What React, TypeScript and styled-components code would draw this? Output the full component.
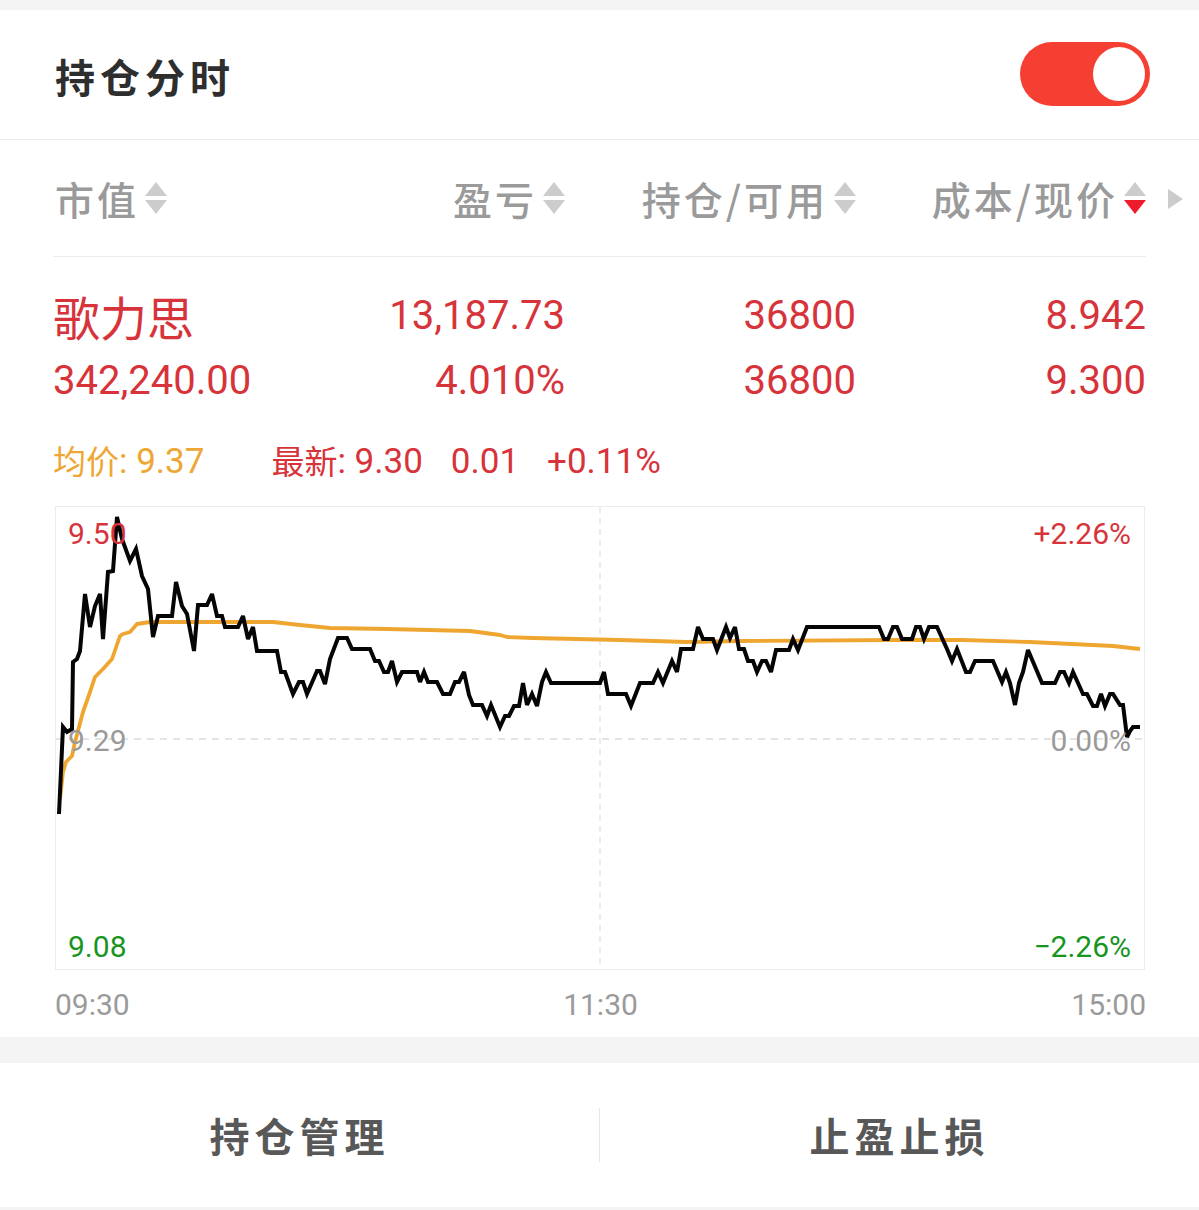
import React from "react";
import styled, { createGlobalStyle } from "styled-components";

const GlobalStyle = createGlobalStyle`
  html, body {
    margin: 0;
    padding: 0;
    background: #ffffff;
  }
  body {
    font-family: Roboto, "Noto Sans CJK SC", sans-serif;
  }
  * {
    box-sizing: border-box;
  }
`;

const RED = "#d7333b";
const ORANGE = "#eea634";
const GREEN = "#16951f";
const GREY = "#9a9a9a";
const CN = `"Noto Sans CJK SC", "Noto Sans", sans-serif`;

const PRICE_POINTS =
  "59,815 63,728 67,733 72,730 73,663 77,660 80,652 85,595 90,628 95,607 100,595 103,640 108,573 113,572 117,518 122,540 130,562 136,550 142,577 148,590 153,638 158,617 172,617 176,583 182,607 187,615 194,652 198,606 207,606 212,595 217,617 222,617 225,628 238,628 243,617 248,640 253,628 257,652 277,652 281,673 285,673 293,695 299,683 303,683 307,695 317,672 320,672 325,685 330,660 338,639 347,639 352,650 370,650 375,662 379,662 384,673 388,673 392,662 397,683 402,673 417,673 420,683 424,673 428,683 437,683 443,695 450,695 455,683 459,683 464,673 469,696 473,706 482,706 487,717 491,706 500,728 505,717 509,717 514,707 519,707 523,684 527,706 532,695 537,707 542,683 546,673 551,684 600,684 604,673 608,695 626,695 631,707 640,684 653,684 658,673 663,684 672,662 677,673 681,650 693,650 698,628 703,640 713,640 717,651 726,628 730,639 735,628 739,650 744,650 748,662 753,662 757,673 762,662 766,662 771,673 776,651 789,651 793,640 798,651 807,628 879,628 884,640 888,640 893,628 897,628 902,640 912,640 916,628 920,628 924,640 929,628 937,628 947,650 952,662 957,650 966,673 970,673 975,662 993,662 1002,683 1006,673 1010,684 1015,706 1019,684 1023,673 1028,651 1042,684 1055,684 1060,673 1064,673 1069,684 1073,673 1083,695 1087,695 1093,707 1097,707 1101,695 1105,707 1110,695 1113,695 1120,706 1123,706 1127,738 1130,732 1133,728 1140,728";

const AVG_POINTS =
  "60,800 63,773 66,763 72,757 75,743 83,713 90,693 95,678 103,670 112,660 120,637 123,635 130,633 137,625 150,623 190,623 273,623 300,626 330,629 387,630 470,632 500,636 507,638 533,639 620,641 687,643 740,642 897,641 963,641 1030,643 1113,647 1140,650";

const columns = [
  { label: "市值", align: "left", sort: "none" },
  { label: "盈亏", align: "right", sort: "none" },
  { label: "持仓/可用", align: "right", sort: "none" },
  { label: "成本/现价", align: "right", sort: "down" },
] as const;

const rows = [
  ["歌力思", "13,187.73", "36800", "8.942"],
  ["342,240.00", "4.010%", "36800", "9.300"],
];

export default function App() {
  return (
    <>
      <GlobalStyle />
      <Page>
        <Strip $h={10} />
        <TopBar>
          <Title>持仓分时</Title>
          <Toggle>
            <Knob />
          </Toggle>
        </TopBar>

        <Content>
          <HeaderRow>
            <HeaderGrid>
              {columns.map((c) => (
                <HeadCell key={c.label} $align={c.align}>
                  <HeadLabel>{c.label}</HeadLabel>
                  <SortIcon>
                    <Tri $dir="up" $active={false} />
                    <Tri $dir="down" $active={c.sort === "down"} />
                  </SortIcon>
                </HeadCell>
              ))}
            </HeaderGrid>
            <MoreCell>
              <MoreArrow />
            </MoreCell>
          </HeaderRow>

          <DataBlock>
            {rows.map((r, i) => (
              <DataGrid key={i}>
                {r.map((v, j) => (
                  <DataCell key={j} $align={j === 0 ? "left" : "right"} $name={i === 0 && j === 0}>
                    {v}
                  </DataCell>
                ))}
              </DataGrid>
            ))}
          </DataBlock>

          <InfoRow>
            <InfoItem $color={ORANGE}>
              <CnText>均价</CnText>: 9.37
            </InfoItem>
            <InfoGroup>
              <InfoItem $color={RED}>
                <CnText>最新</CnText>: 9.30
              </InfoItem>
              <InfoItem $color={RED}>0.01</InfoItem>
              <InfoItem $color={RED}>+0.11%</InfoItem>
            </InfoGroup>
          </InfoRow>

          <Chart>
            <ChartSvg viewBox="55 507 1090 464" preserveAspectRatio="none">
              <line x1="600" y1="508" x2="600" y2="970" stroke="#e6e6e6" strokeWidth="1.5" strokeDasharray="6 5" />
              <line x1="56" y1="740" x2="1144" y2="740" stroke="#dcdcdc" strokeWidth="1.5" strokeDasharray="7 6" />
              <polyline points={AVG_POINTS} fill="none" stroke="#efa631" strokeWidth="3.8" strokeLinejoin="round" />
              <polyline points={PRICE_POINTS} fill="none" stroke="#050505" strokeWidth="4" strokeLinejoin="miter" strokeMiterlimit="3" />
            </ChartSvg>
            <AxisLabel $color={RED} $top={12} $side="left">9.50</AxisLabel>
            <AxisLabel $color={RED} $top={12} $side="right">+2.26%</AxisLabel>
            <AxisLabel $color={GREY} $top={219} $side="left">9.29</AxisLabel>
            <AxisLabel $color={GREY} $top={219} $side="right">0.00%</AxisLabel>
            <AxisLabel $color={GREEN} $top={425} $side="left">9.08</AxisLabel>
            <AxisLabel $color={GREEN} $top={425} $side="right">−2.26%</AxisLabel>
          </Chart>

          <TimeRow>
            <span>09:30</span>
            <span>11:30</span>
            <span>15:00</span>
          </TimeRow>
        </Content>

        <Strip $h={26} />
        <Actions>
          <ActionButton>持仓管理</ActionButton>
          <ActionDivider />
          <ActionButton>止盈止损</ActionButton>
        </Actions>
        <Strip $h={3} />
      </Page>
    </>
  );
}

const Page = styled.div`
  width: 1199px;
  background: #fff;
`;

const Strip = styled.div<{ $h: number }>`
  height: ${({ $h }) => $h}px;
  background: #f4f4f4;
`;

const TopBar = styled.header`
  height: 130px;
  display: flex;
  align-items: center;
  justify-content: space-between;
  padding: 0 49px 0 55px;
  border-bottom: 1px solid #ececec;
`;

const Title = styled.h1`
  margin: 0;
  font-family: ${CN};
  font-size: 40px;
  font-weight: 700;
  letter-spacing: 5px;
  color: #2e2e2e;
  position: relative;
  top: 1px;
`;

const Toggle = styled.div`
  width: 130px;
  height: 64px;
  border-radius: 32px;
  background: #f53f33;
  display: flex;
  align-items: center;
  justify-content: flex-end;
  padding-right: 5px;
  position: relative;
  top: -1px;
`;

const Knob = styled.div`
  width: 52px;
  height: 54px;
  border-radius: 50%;
  background: #fff;
`;

const Content = styled.section`
  padding: 0 53px 14px 53px;
`;

const HeaderRow = styled.div`
  display: flex;
  margin-right: -53px;
`;

const gridCols = `222px 290px 291px 290px`;

const HeaderGrid = styled.div`
  flex: 0 0 1093px;
  display: grid;
  grid-template-columns: ${gridCols};
  height: 117px;
  align-items: center;
  border-bottom: 1px solid #ececec;
`;

const HeadCell = styled.div<{ $align: "left" | "right" }>`
  display: flex;
  align-items: center;
  justify-content: ${({ $align }) => ($align === "left" ? "flex-start" : "flex-end")};
  gap: 6px;
  padding-left: ${({ $align }) => ($align === "left" ? "2px" : "0")};
`;

const HeadLabel = styled.span`
  font-family: ${CN};
  font-size: 39px;
  font-weight: 500;
  letter-spacing: 3px;
  color: ${GREY};
  line-height: 1;
`;

const SortIcon = styled.span`
  display: flex;
  flex-direction: column;
  gap: 4px;
`;

const Tri = styled.span<{ $dir: "up" | "down"; $active: boolean }>`
  width: 0;
  height: 0;
  border-left: 11px solid transparent;
  border-right: 11px solid transparent;
  ${({ $dir, $active }) =>
    $dir === "up"
      ? `border-bottom: 14px solid #cccccc;`
      : `border-top: 14px solid ${$active ? "#ee1c2a" : "#cccccc"};`}
`;

const MoreCell = styled.div`
  flex: 1;
  display: flex;
  align-items: center;
  padding-left: 22px;
`;

const MoreArrow = styled.span`
  width: 0;
  height: 0;
  border-top: 10px solid transparent;
  border-bottom: 10px solid transparent;
  border-left: 15px solid #cccccc;
`;

const DataBlock = styled.div`
  padding-top: 26px;
`;

const DataGrid = styled.div`
  display: grid;
  grid-template-columns: ${gridCols};
  height: 65px;
  align-items: center;
`;

const DataCell = styled.div<{ $align: "left" | "right"; $name: boolean }>`
  text-align: ${({ $align }) => $align};
  font-family: ${({ $name }) => ($name ? CN : `Roboto, sans-serif`)};
  font-size: ${({ $name }) => ($name ? "47px" : "40px")};
  color: ${RED};
  white-space: nowrap;
  line-height: 1;
`;

const InfoRow = styled.div`
  display: flex;
  align-items: center;
  gap: 67px;
  height: 40px;
  margin-top: 29px;
  margin-bottom: 24px;
`;

const InfoGroup = styled.div`
  display: flex;
  align-items: center;
  gap: 28px;
`;

const InfoItem = styled.span<{ $color: string }>`
  font-family: Roboto, sans-serif;
  font-size: 35px;
  line-height: 40px;
  height: 40px;
  color: ${({ $color }) => $color};
  white-space: nowrap;
`;

const CnText = styled.span`
  font-family: ${CN};
  font-size: 33px;
  line-height: 40px;
  vertical-align: top;
  position: relative;
  top: -2px;
`;

const Chart = styled.div`
  position: relative;
  height: 464px;
  margin: 0 1px 0 2px;
  border: 1px solid #ececec;
`;

const ChartSvg = styled.svg`
  position: absolute;
  left: -1px;
  top: -1px;
  width: 1090px;
  height: 464px;
  overflow: visible;
`;

const AxisLabel = styled.span<{ $color: string; $top: number; $side: "left" | "right" }>`
  position: absolute;
  top: ${({ $top }) => $top}px;
  ${({ $side }) => ($side === "left" ? "left: 12px;" : "right: 13px;")}
  font-family: Roboto, sans-serif;
  font-size: 30px;
  line-height: 30px;
  color: ${({ $color }) => $color};
`;

const TimeRow = styled.div`
  display: flex;
  justify-content: space-between;
  padding: 0 0 0 2px;
  margin-top: 17px;
  height: 36px;
  font-family: Roboto, sans-serif;
  font-size: 30px;
  line-height: 36px;
  color: ${GREY};
`;

const Actions = styled.div`
  height: 144px;
  display: flex;
  align-items: center;
`;

const ActionButton = styled.button`
  flex: 1;
  height: 100%;
  border: none;
  background: #fff;
  font-family: ${CN};
  font-size: 40px;
  font-weight: 700;
  letter-spacing: 5px;
  color: #585858;
  cursor: pointer;
`;

const ActionDivider = styled.div`
  width: 1px;
  height: 54px;
  background: #e6e6e6;
`;
